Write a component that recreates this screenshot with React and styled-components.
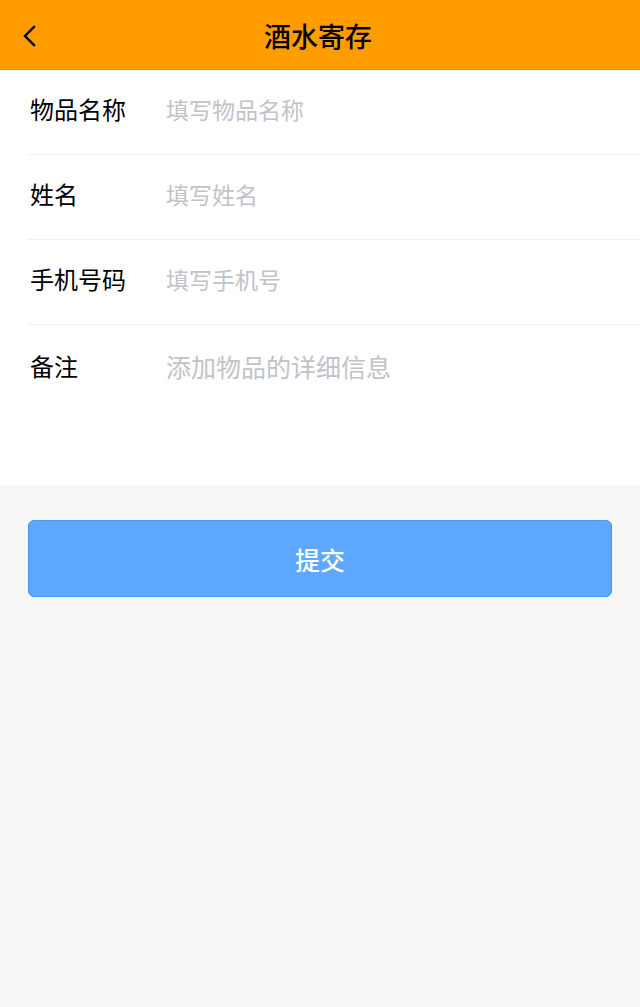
import React from "react";
import styled, { createGlobalStyle } from "styled-components";

const GlobalStyle = createGlobalStyle`
  html, body {
    margin: 0;
    padding: 0;
    background: #f7f7f7;
    font-family: "Noto Sans CJK SC", "Noto Sans", sans-serif;
  }
  * { box-sizing: border-box; }
`;

const Page = styled.div`
  width: 640px;
  min-height: 1007px;
  background: #f7f7f7;
`;

const Header = styled.div`
  height: 70px;
  background: #ff9d00;
  border-bottom: 1px solid #f08e00;
  display: flex;
  align-items: center;
  justify-content: center;
  position: relative;
`;

const BackButton = styled.button`
  position: absolute;
  left: 18px;
  top: 22px;
  width: 22px;
  height: 28px;
  padding: 0;
  border: none;
  background: none;
  display: flex;
  align-items: center;
  justify-content: center;
`;

const Title = styled.h1`
  margin: 0 0 0 -4px;
  font-size: 27px;
  font-weight: 500;
  color: #000;
  line-height: 1;
  margin-top: 2px;
`;

const Form = styled.div`
  background: #fff;
`;

const Row = styled.div`
  display: flex;
  align-items: ${(p) => (p.$top ? "flex-start" : "center")};
  height: ${(p) => (p.$top ? "160px" : "85px")};
  margin-left: 28px;
  padding-top: ${(p) => (p.$top ? "25px" : "0")};
  padding-bottom: ${(p) => (p.$top ? "0" : "6px")};
  border-bottom: ${(p) => (p.$last ? "none" : "1px solid #f1f1f1")};
`;

const Label = styled.div`
  width: 138px;
  padding-left: 2px;
  font-size: 24px;
  color: #000;
  line-height: 32px;
  flex-shrink: 0;
`;

const Input = styled.input`
  flex: 1;
  border: none;
  outline: none;
  background: transparent;
  font-family: inherit;
  font-size: 23px;
  color: #333;
  padding: 0;
  line-height: 32px;
  &::placeholder {
    color: #c2c2c8;
  }
`;

const TextArea = styled.textarea`
  flex: 1;
  border: none;
  outline: none;
  resize: none;
  background: transparent;
  font-family: inherit;
  font-size: 25px;
  line-height: 32px;
  height: 110px;
  padding: 0;
  color: #333;
  &::placeholder {
    color: #c2c2c8;
  }
`;

const Actions = styled.div`
  padding: 35px 28px 0;
`;

const SubmitButton = styled.button`
  width: 100%;
  height: 77px;
  border: 1px solid #4a97f5;
  border-radius: 6px;
  background: #5ea7ff;
  color: #fff;
  font-family: inherit;
  font-size: 25px;
  font-weight: 500;
`;

const fields = [
  { label: "物品名称", placeholder: "填写物品名称" },
  { label: "姓名", placeholder: "填写姓名" },
  { label: "手机号码", placeholder: "填写手机号" },
];

export default function App() {
  return (
    <Page>
      <GlobalStyle />
      <Header>
        <BackButton aria-label="返回">
          <svg width="14" height="22" viewBox="0 0 14 22">
            <path
              d="M12 2 L3 11 L12 20"
              fill="none"
              stroke="#000"
              strokeWidth="2.4"
              strokeLinecap="square"
            />
          </svg>
        </BackButton>
        <Title>酒水寄存</Title>
      </Header>
      <Form>
        {fields.map((f) => (
          <Row key={f.label}>
            <Label>{f.label}</Label>
            <Input placeholder={f.placeholder} />
          </Row>
        ))}
        <Row $top $last>
          <Label>备注</Label>
          <TextArea placeholder="添加物品的详细信息" />
        </Row>
      </Form>
      <Actions>
        <SubmitButton>提交</SubmitButton>
      </Actions>
    </Page>
  );
}
